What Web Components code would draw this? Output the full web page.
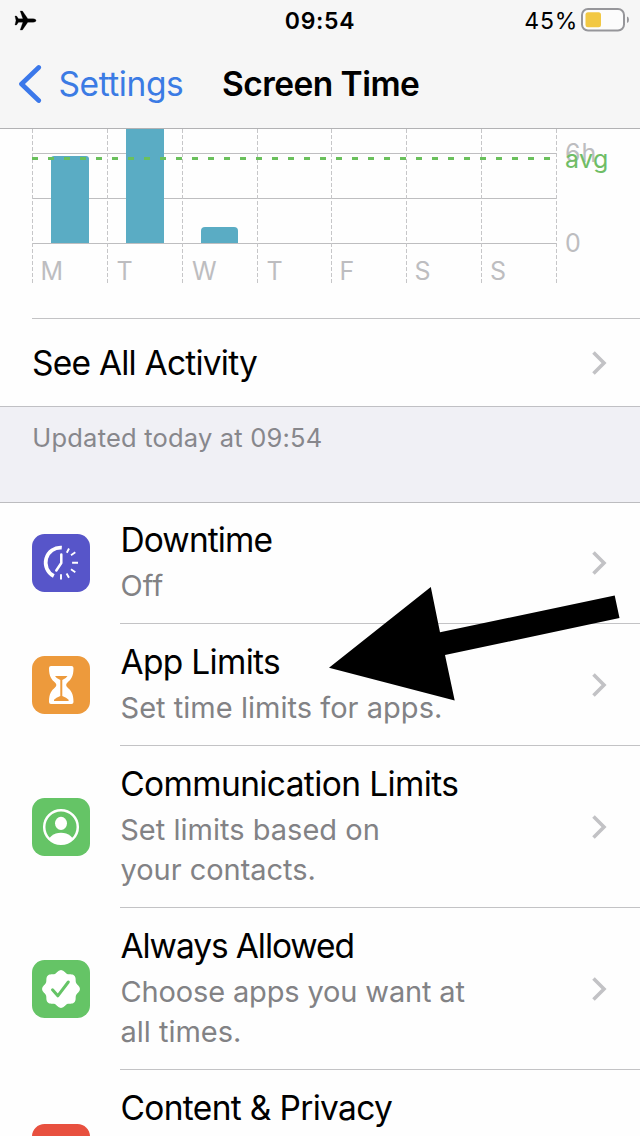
<!DOCTYPE html>
<html lang="en">
<head>
<meta charset="utf-8">
<title>Screen Time</title>
<style>
html,body{margin:0;height:1136px;overflow:hidden;background:#fefefe}
body{font-family:Inter,"Liberation Sans",sans-serif;color:#000;width:640px}
</style>
</head>
<body>
<screen-time-page></screen-time-page>
<script>
const define = (name, html, setup) => customElements.define(name, class extends HTMLElement {
  connectedCallback() {
    if (this.shadowRoot) return;
    const root = this.attachShadow({ mode: 'open' });
    const t = document.createElement('template');
    t.innerHTML = typeof html === 'function' ? html(this) : html;
    root.append(t.content.cloneNode(true));
    if (setup) setup(this, root);
  }
});
const ctx = document.createElement('canvas').getContext('2d');

/* One line of text. "ink" is the drawn width; tracking is adjusted to reach it. "dx" nudges the side bearing. */
define('text-line', el => {
  const size = +el.getAttribute('size'), weight = el.getAttribute('weight') || 400;
  const lh = el.getAttribute('lh') || Math.round(size * 1.3);
  const text = el.textContent.trim();
  ctx.font = `${weight} ${size}px Inter, "Liberation Sans", sans-serif`;
  const m = ctx.measureText(text);
  const natural = m.actualBoundingBoxRight + m.actualBoundingBoxLeft;
  const ink = +el.getAttribute('ink') || natural;
  const dx = +el.getAttribute('dx') || 0;
  const track = text.length > 1 ? (ink - natural) / (text.length - 1) : 0;
  return `<style>
    :host{display:block;white-space:nowrap;flex:none;height:${lh}px;width:${ink}px;
      font-size:${size}px;font-weight:${weight};line-height:${lh}px;letter-spacing:${track.toFixed(3)}px}
    span{display:block;margin-left:${(m.actualBoundingBoxLeft + dx).toFixed(2)}px}
  </style><span><slot></slot></span>`;
});

define('status-bar', `<style>
  :host{display:grid;grid-template:40px / 1fr auto 1fr;align-items:center;height:40px;box-sizing:border-box;padding:0 11px 0 14px}
  svg{display:block}
  text-line{margin-top:2px}
  .end{display:flex;justify-content:flex-end;align-items:center;gap:6px}
  </style>
  <svg width="23" height="22" viewBox="0 0 23 22"><path stroke="#000" stroke-width=".3" d="M22 11.500c0-1-1.300-1.700-2.800-1.700h-5.400L8.400 2H6.200l2.700 7.800H4.500L2.500 7H1l1 4.500L1 16h1.500l2-2.800h4.400L6.200 21h2.200l5.400-7.800h5.400c1.500 0 2.800-.7 2.800-1.700z"/></svg>
  <text-line size="23" weight="600" lh="38" ink="68.5" dx="-1.5">09:54</text-line>
  <div class="end"><text-line size="23" lh="38" ink="49.5" dx="-.3">45%</text-line>
  <svg width="48" height="24" viewBox="0 0 48 24"><rect x="1" y="1" width="42" height="21.500" rx="6" fill="#fcfcfc" stroke="#96969a" stroke-width="2"/><rect x="4.500" y="4.300" width="15.500" height="15" rx="2.500" fill="#f2c843"/><path d="M46 8.500q2 .5 2 3.300t-2 3.300z" fill="#96969a"/></svg></div>`);

define('nav-bar', `<style>
  :host{display:flex;flex-direction:column;height:129px;box-sizing:border-box;background:#f6f6f6;border-bottom:1px solid #b2b2b4}
  .row{display:flex;align-items:center;height:88px;padding-left:18px}
  .back{display:flex;align-items:center;color:#3b7be4}
  svg{display:block;margin-right:18px}
  .title{margin-left:41px}
  </style>
  <status-bar></status-bar>
  <div class="row"><div class="back">
  <svg width="24" height="40" viewBox="0 0 24 40"><path d="M20.700 3.500L3.500 20 20.700 36.500" fill="none" stroke="#3b78ea" stroke-width="4.700" stroke-linecap="round" stroke-linejoin="round"/></svg>
  <text-line size="33.5" lh="88" ink="122.5" dx="-.5">Settings</text-line></div>
  <text-line class="title" size="33.5" weight="600" lh="88" ink="196" dx="-.5">Screen Time</text-line></div>`);

define('usage-chart', () => {
  const xs = [32, 107, 182, 257, 331, 406, 481, 556];
  return `<style>
  :host{display:block;position:relative;height:189px;color:#bdbdc0}
  svg{display:block}
  .days{display:grid;grid-template-columns:75px 74.500px 75.500px 74px 74px 75.500px 75px;padding-left:42.500px;margin-top:-30px}
  .mark{position:absolute;left:566px}
  .avg{color:#6fbd66}
  </style>
  <svg width="640" height="155" viewBox="0 129 640 155">
  ${[153, 198, 243].map(y => `<rect x="32" y="${y}" width="525" height="1" fill="#bebec0"/>`).join('')}
  ${xs.map(x => `<path d="M${x + .5} 129V283" stroke="#c6c6c8" stroke-dasharray="4 2"/>`).join('')}
  <g fill="#5aacc4"><path d="M51 243V159q0-3 3-3h32q3 0 3 3v84z"/><path d="M126 129h38v114h-38z"/><path d="M201 243v-12q0-4 4-4h29q4 0 4 4v12z"/></g>
  <path d="M32 158.500H556" stroke="#6ac05c" stroke-width="3" stroke-dasharray="6 10"/></svg>
  <div class="days">${['M', 'T', 'W', 'T', 'F', 'S', 'S'].map(d => `<text-line size="25" lh="34">${d}</text-line>`).join('')}</div>
  <text-line class="mark" style="top:7px" size="25" lh="34" ink="28.5">6h</text-line>
  <text-line class="mark avg" style="top:13px" size="25" lh="34" ink="41">avg</text-line>
  <text-line class="mark" style="top:97px" size="25" lh="34">0</text-line>`;
});

define('disclosure-chevron', `<style>:host{display:block;flex:none}svg{display:block}</style>
  <svg width="16" height="26" viewBox="0 0 16 26"><path d="M2.500 2.500L13 13 2.500 23.500" fill="none" stroke="#c2c2c5" stroke-width="3.600"/></svg>`);

define('activity-link', `<style>
  :host{display:flex;align-items:center;justify-content:space-between;height:88px;margin-left:32px;padding:1px 33px 0 1px;border-top:1px solid #c3c3c5;box-sizing:border-box}
  </style><text-line size="33.5" lh="88" ink="224">See All Activity</text-line><disclosure-chevron></disclosure-chevron>`);

define('section-footer', `<style>
  :host{display:block;height:97px;box-sizing:border-box;background:#f0f0f5;border-top:1px solid #c0c0c4;border-bottom:1px solid #bcbcbf;padding:13px 0 0 33px;color:#87878c}
  </style><text-line size="25.5" lh="36" ink="286.5" dx="1.3">Updated today at 09:54</text-line>`);

const badge = (() => {
  const p = [];
  for (let i = 0; i < 160; i++) {
    const a = i / 160 * Math.PI * 2, r = 17.6 + 1.3 * Math.cos(8 * a);
    p.push(`${(29 + r * Math.cos(a)).toFixed(2)},${(29 + r * Math.sin(a)).toFixed(2)}`);
  }
  return p.join(' ');
})();
const icons = {
  downtime: ['#5755c9', `<g fill="none" stroke="#fff"><path d="M29.800 13.700A15 15 0 0 0 21.800 42" stroke-width="3.700"/><path d="M29.300 20.500V29l-5 7.500" stroke-width="2.500" stroke-linecap="round" stroke-linejoin="round"/><path d="M37 14.500l-2.200 4.200M43.300 18.300L39 21.200M46 28.700h-5.900M43.300 38.200L39 35.300M37 43.700l-2.400-4.200M29 45.500v-5.200" stroke-width="1.900"/></g>`],
  limits: ['#ed9a3c', `<path fill="#fff" d="M19 10h20.500q2 0 2 2c0 8.500-2.500 11.500-6 14.500q-2.700 2.500 0 5c3.500 3 6 6 6 14.500q0 2-2 2H19q-2 0-2-2c0-8.500 2.500-11.500 6-14.500q2.700-2.500 0-5c-3.500-3-6-6-6-14.500q0-2 2-2z"/><path fill="#ed9a3c" d="M23 20h12.500q-1.300 2.500-5.200 4v16q4.300 1.500 6.300 3.700v1.300H22v-1.300q2-2.200 6.300-3.700V24q-4-1.500-5.300-4z"/>`],
  contacts: ['#65c466', `<clipPath id="c"><circle cx="29" cy="29" r="17"/></clipPath><circle cx="29" cy="29" r="16.800" fill="none" stroke="#fff" stroke-width="2.500"/><ellipse cx="29" cy="25.300" rx="6" ry="6.600" fill="#fff"/><ellipse cx="29" cy="46" rx="13.500" ry="11.300" fill="#fff" clip-path="url(#c)"/>`],
  allowed: ['#65c466', `<polygon fill="#fff" points="${badge}"/><path d="M20.500 29.800l5.300 6L36.300 22" fill="none" stroke="#65c466" stroke-width="3" stroke-linecap="round" stroke-linejoin="round"/>`],
  privacy: ['#e8503f', '']
};
define('app-icon', el => {
  const [color, art] = icons[el.getAttribute('name')];
  return `<style>:host{display:block;flex:none;width:58px;height:58px}svg{display:block}</style>
  <svg width="58" height="58" viewBox="0 0 58 58"><rect width="58" height="58" rx="12.500" fill="${color}"/>${art}</svg>`;
});

define('settings-row', el => `<style>
  :host{display:flex;align-items:center;padding-left:32px;height:${el.getAttribute('height')}px;box-sizing:border-box}
  .body{align-self:stretch;flex:1;margin-left:30px;display:flex;align-items:center;justify-content:space-between;border-bottom:1px solid #c3c3c5;padding-right:33px}
  .copy{align-self:flex-start;padding:16px 0 0 1.500px}
  .sub{color:#828285;margin-top:4px}
  </style><app-icon name="${el.getAttribute('icon')}"></app-icon>
  <div class="body"><div class="copy"><slot></slot><div class="sub"><slot name="sub"></slot></div></div><disclosure-chevron></disclosure-chevron></div>`);

define('pointer-arrow', `<style>:host{position:absolute;left:320px;top:580px;pointer-events:none}svg{display:block}</style>
  <svg width="310" height="130" viewBox="320 580 310 130"><path d="M329 667.700L430.800 587l9.200 45.300 174.700-36.800 4.800 22.600L445 655l9.700 45.500z"/></svg>`);

define('screen-time-page', () => {
  const t = (s, ink, dx = 0) => `<text-line size="33.5" lh="44" ink="${ink}" dx="${dx}">${s}</text-line>`;
  const s = (s, ink, dx = 0) => `<text-line slot="sub" size="29" lh="40" ink="${ink}" dx="${dx}">${s}</text-line>`;
  return `<style>
  :host{display:flex;flex-direction:column;position:relative;width:640px;height:1136px;overflow:hidden;background:#fefefe}
  nav-bar,usage-chart,activity-link,section-footer,.group{flex:none}
  .group{margin-top:-1px}
  </style>
  <nav-bar></nav-bar><usage-chart></usage-chart><activity-link></activity-link><section-footer></section-footer>
  <div class="group">
  <settings-row icon="downtime" height="122">${t('Downtime', 149, 1)}${s('Off', 42)}</settings-row>
  <settings-row icon="limits" height="122">${t('App Limits', 158.5, -1)}${s('Set time limits for apps.', 319.5)}</settings-row>
  <settings-row icon="contacts" height="162">${t('Communication Limits', 336, -.3)}${s('Set limits based on', 256.5, -.3)}${s('your contacts.', 194, -1)}</settings-row>
  <settings-row icon="allowed" height="162">${t('Always Allowed', 232, -1)}${s('Choose apps you want at', 343)}${s('all times.', 118.5)}</settings-row>
  <settings-row icon="privacy" height="166">${t('Content &amp; Privacy', 270.5)}</settings-row>
  </div>
  <pointer-arrow></pointer-arrow>`;
});
</script>
</body>
</html>
